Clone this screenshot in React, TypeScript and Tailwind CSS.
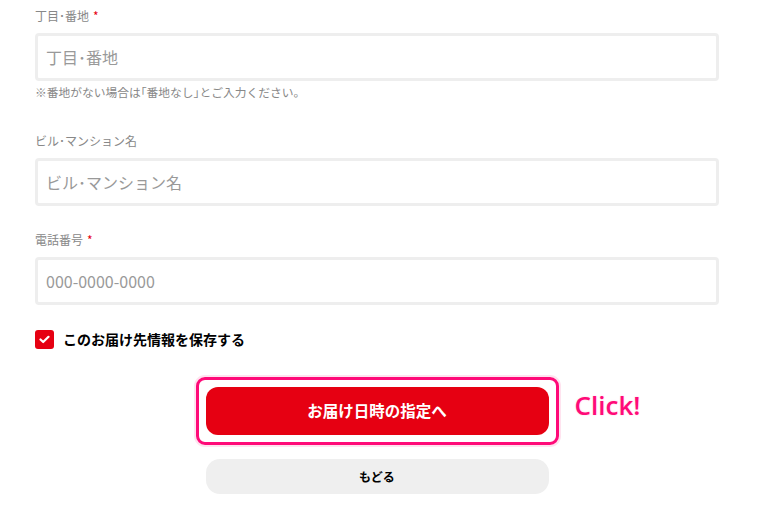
import React from 'react';

const font = "font-['Noto_Sans_CJK_JP','Noto_Sans',sans-serif]";

const Field = ({ label, required, placeholder, note }: { label: string; required?: boolean; placeholder: string; note?: string }) => {
  return (
    <div>
      <p className="text-[12px] leading-[17px] text-[#888]">
        {label}
        {required && <span className="ml-1 text-[#e60012]">*</span>}
      </p>
      <div className="mt-[9px] flex h-[48px] items-center rounded-[4px] border-[3px] border-[#eeeeee] bg-white px-[8px]">
        <input
          type="text"
          placeholder={placeholder}
          className="w-full bg-transparent text-[16px] text-[#333] placeholder:text-[#999] focus:outline-none"
        />
      </div>
      {note && <p className="mt-[3px] text-[11.75px] leading-[16px] text-[#888]">{note}</p>}
    </div>
  );
};

const App = () => {
  return (
    <div className={`min-h-[510px] w-[768px] bg-white ${font}`}>
      <div className="ml-[35px] w-[684px] pt-[7px]">
        <Field label="丁目･番地" required placeholder="丁目･番地" note="※番地がない場合は｢番地なし｣とご入力ください。" />
        <div className="mt-[32px]">
          <Field label="ビル･マンション名" placeholder="ビル･マンション名" />
        </div>
        <div className="mt-[25px]">
          <Field label="電話番号" required placeholder="000-0000-0000" />
        </div>

        <label className="mt-[24px] flex items-center gap-[9px]">
          <span className="flex h-[19px] w-[19px] items-center justify-center rounded-[3px] bg-[#e60012]">
            <svg width="11" height="9" viewBox="0 0 11 9" fill="none">
              <path d="M1.5 4.5 L4.2 7 L9.5 1.8" stroke="white" strokeWidth="2.2" strokeLinecap="round" strokeLinejoin="round" />
            </svg>
          </span>
          <span className="text-[14px] font-bold text-black">このお届け先情報を保存する</span>
        </label>

        <div className="mt-[27px] flex flex-col items-center">
          <div className="relative">
            <div className="rounded-[9px] border-[3px] border-[#ff0a78] p-[7px] shadow-[0_0_0_2px_#ffe3ef]">
              <button className="flex h-[48px] w-[343px] items-center justify-center rounded-[12px] bg-[#e60012] text-[15.5px] font-bold text-white">
                お届け日時の指定へ
              </button>
            </div>
            <span className="absolute left-[379px] top-[10px] font-['Open_Sans',sans-serif] text-[26px] font-semibold leading-[36px] text-[#ff0a78] [text-shadow:0_0_2px_#ffe3ef,0_0_2px_#ffe3ef]">
              Click!
            </span>
          </div>
          <button className="mt-[14px] flex h-[35px] w-[343px] items-center justify-center rounded-[14px] bg-[#efefef] text-[12px] font-bold text-black">
            もどる
          </button>
        </div>
      </div>
    </div>
  );
};

export default App;
